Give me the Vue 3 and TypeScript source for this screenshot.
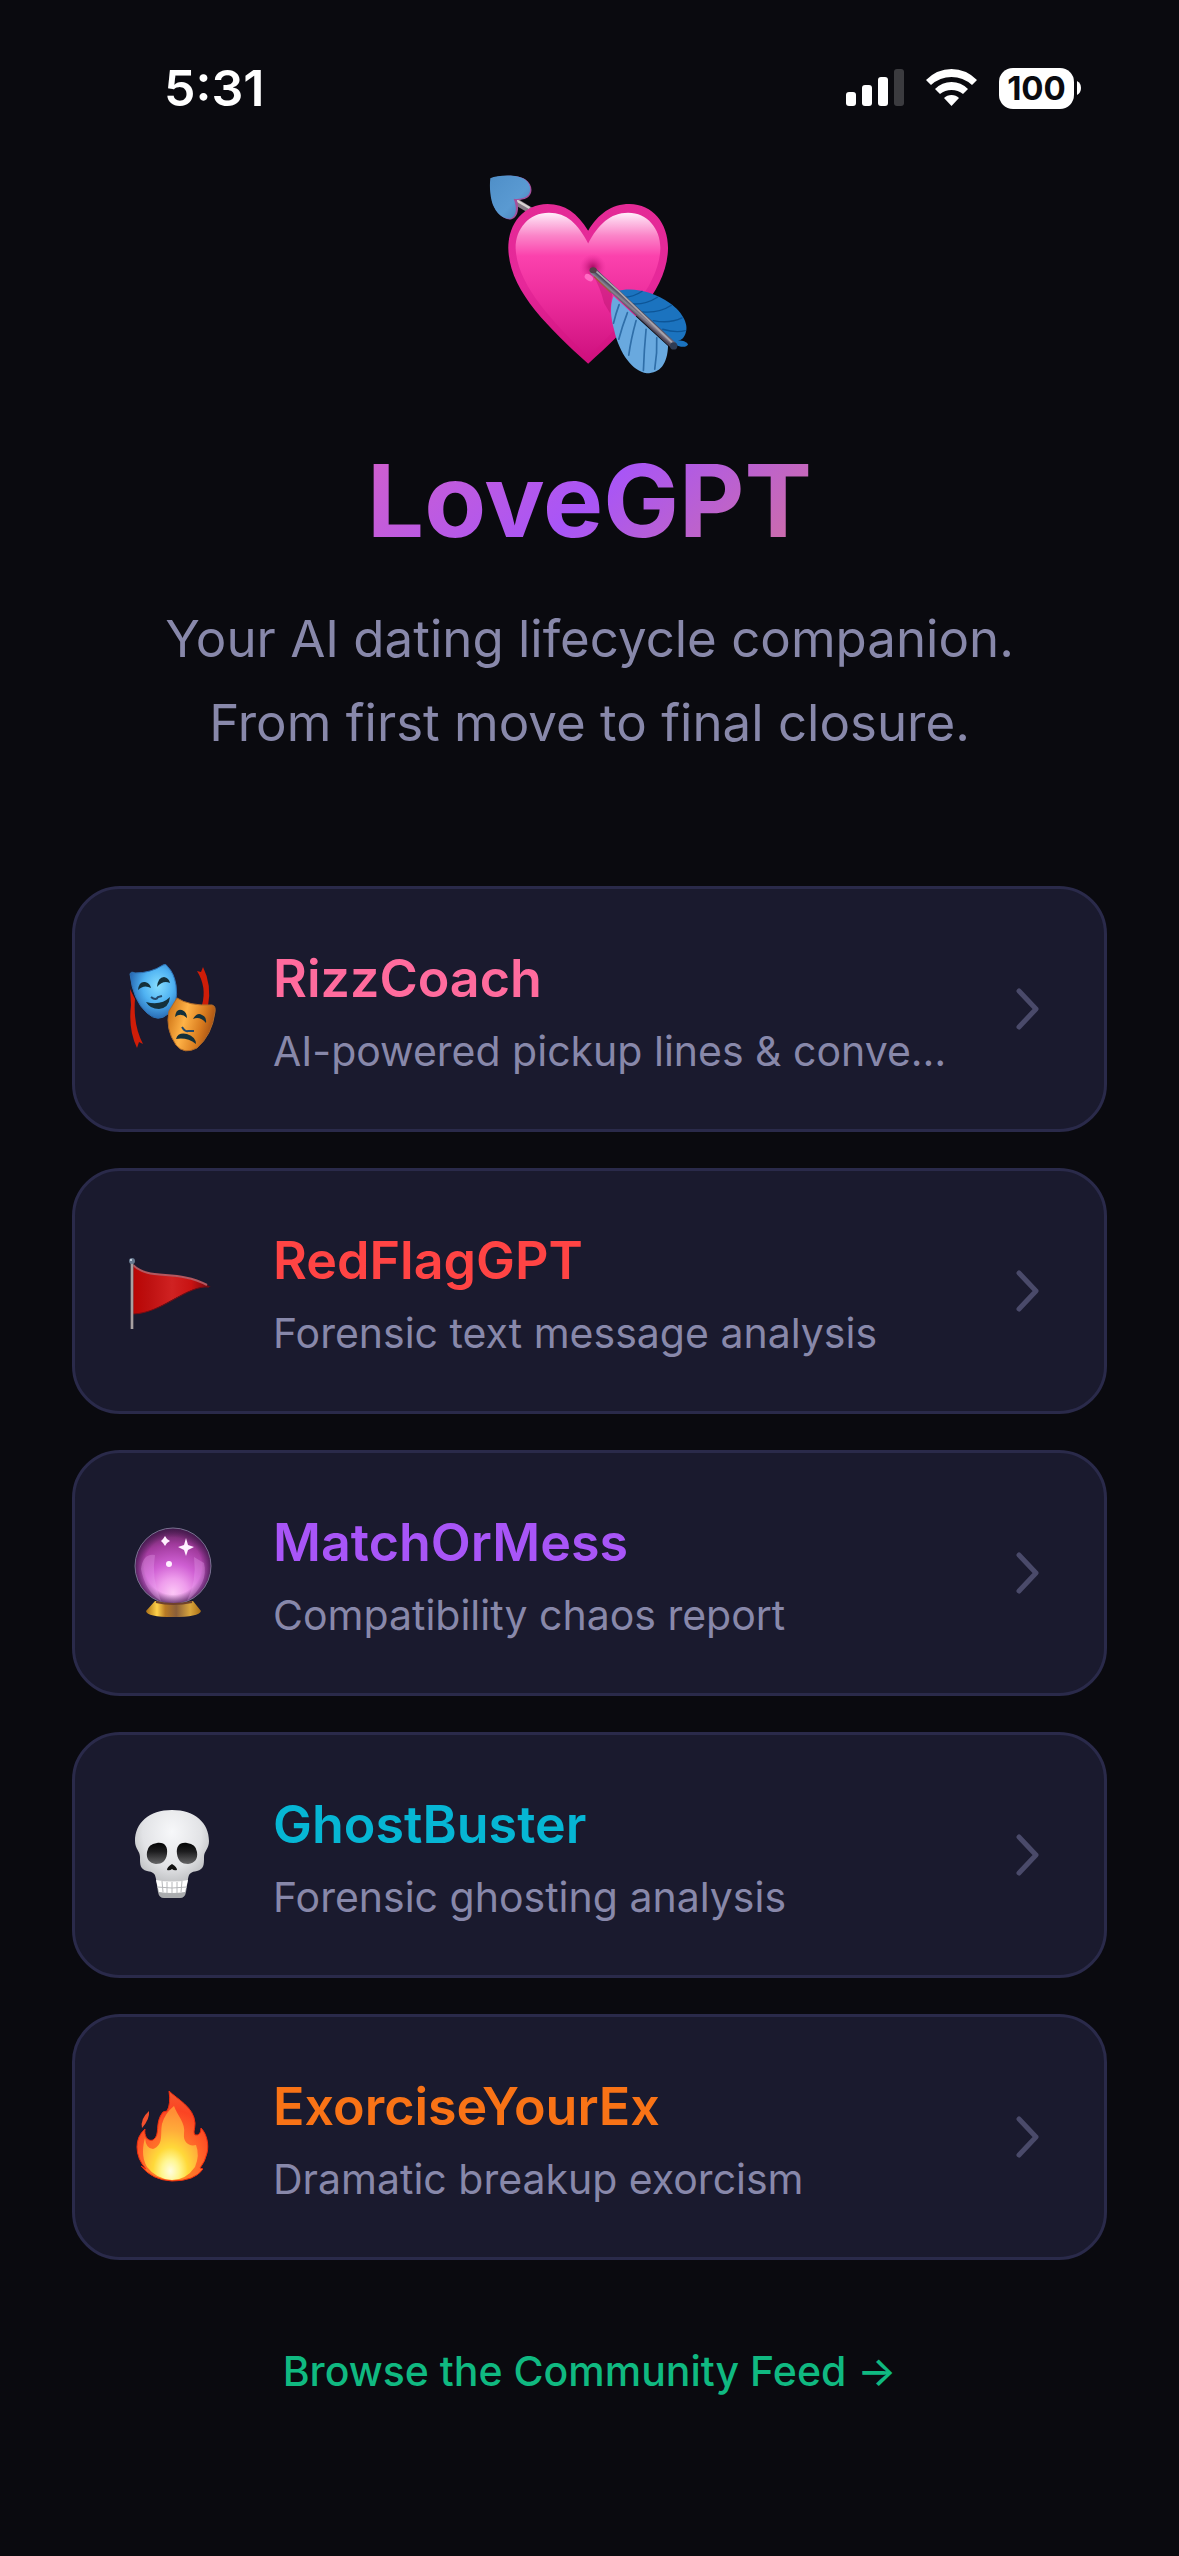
<script setup lang="ts">
interface Tool {
  id: 'masks' | 'flag' | 'crystal' | 'skull' | 'fire'
  name: string
  description: string
}

const tools: Tool[] = [
  { id: 'masks', name: 'RizzCoach', description: 'AI-powered pickup lines & conve…' },
  { id: 'flag', name: 'RedFlagGPT', description: 'Forensic text message analysis' },
  { id: 'crystal', name: 'MatchOrMess', description: 'Compatibility chaos report' },
  { id: 'skull', name: 'GhostBuster', description: 'Forensic ghosting analysis' },
  { id: 'fire', name: 'ExorciseYourEx', description: 'Dramatic breakup exorcism' },
]
</script>

<template>
  <div class="screen">
    <header class="status">
      <time class="clock">5:31</time>
      <div class="indicators">
        <svg class="signal" viewBox="0 0 58 38" aria-label="Signal">
          <rect x="0" y="23" width="10" height="14" rx="3" />
          <rect x="16" y="16" width="10" height="21" rx="3" />
          <rect x="32" y="8" width="10" height="29" rx="3" />
          <rect x="48" y="0" width="10" height="37" rx="3" opacity=".2" />
        </svg>
        <svg class="wifi" viewBox="0 0 51 38" aria-label="Wi-Fi">
          <path d="M0 11Q11 0 25.500 0T51 11L46 16Q37 8 25.500 8T5 16Z" />
          <path d="M9 20Q16 13 25.500 13T42 20L37 25Q32 21 25.500 21T14 25Z" />
          <path d="M18 29Q21 26 25.500 26T33 29L25.500 37Z" />
        </svg>
        <div class="battery">
          <span class="level">100</span>
          <svg class="nub" viewBox="0 0 4 14"><path d="M0 0Q4 2 4 7T0 14Z" /></svg>
        </div>
      </div>
    </header>

    <main class="content">
      <svg class="hero" viewBox="40 30 640 630" role="img" aria-label="Heart with arrow">
        <defs>
          <linearGradient id="heartEdge" x1="0" y1="0" x2="0" y2="1">
            <stop offset="0" stop-color="#e42a96" />
            <stop offset=".5" stop-color="#e6289a" />
            <stop offset="1" stop-color="#cf0f7c" />
          </linearGradient>
          <linearGradient id="heartFill" x1="0" y1="0" x2="0" y2="1">
            <stop offset="0" stop-color="#fff0fa" />
            <stop offset=".06" stop-color="#fdc4e6" />
            <stop offset=".16" stop-color="#fb84c8" />
            <stop offset=".3" stop-color="#fb42ad" />
            <stop offset=".6" stop-color="#ec2c9c" />
            <stop offset="1" stop-color="#d01280" />
          </linearGradient>
          <linearGradient id="tipFill" x1="0" y1="0" x2="1" y2="1">
            <stop offset="0" stop-color="#4f8fc8" />
            <stop offset=".6" stop-color="#5a9ad2" />
            <stop offset="1" stop-color="#4479b0" />
          </linearGradient>
          <linearGradient id="shaft" gradientUnits="userSpaceOnUse" x1="480" y1="450" x2="492" y2="436">
            <stop offset="0" stop-color="#4d4557" />
            <stop offset=".5" stop-color="#8b8594" />
            <stop offset="1" stop-color="#4b4a60" />
          </linearGradient>
          <radialGradient id="pierce">
            <stop offset="0" stop-color="#a80a62" />
            <stop offset="1" stop-color="#e6289a" stop-opacity="0" />
          </radialGradient>
        </defs>
        <path d="M128 118L184 152" stroke="#857b85" stroke-width="20" />
        <path d="M132 116L180 144" stroke="#d8d3d3" stroke-width="7" />
        <path d="M66 54C90 45 145 42 168 58C192 74 192 108 165 117C154 120 148 120 142 120C150 148 144 172 124 178C98 180 74 150 68 124C62 98 62 72 66 54Z" fill="#a54f9c" />
        <path d="M62 54C86 44 142 41 166 58C188 74 188 106 160 114C149 117 140 117 132 116C144 146 140 170 120 176C94 178 72 148 66 122C60 96 60 72 62 54Z" fill="url(#tipFill)" />
        <path d="M356 212C324 160 286 132 234 132C164 132 116 190 116 264C118 390 232 498 356 612C480 498 594 392 596 264C596 190 550 132 480 132C426 132 386 162 356 212Z" fill="url(#heartEdge)" />
        <path d="M356 250C326 192 292 158 238 158C178 158 138 206 138 264C142 372 242 478 356 590C470 478 570 374 573 264C573 206 534 158 476 158C422 158 386 194 356 250Z" fill="url(#heartFill)" />
        <path d="M370 345Q392 380 404 430L422 460L428 400Z" fill="#b9146f" opacity=".45" />
        <circle cx="370" cy="322" r="40" fill="url(#pierce)" />
        <ellipse cx="358" cy="353" rx="14" ry="9" fill="#ff6cc4" transform="rotate(35 358 353)" />
        <path d="M440 394C490 380 550 394 602 430C642 458 660 498 648 522C642 538 632 542 622 542C634 540 654 544 656 554C650 566 628 560 612 552L604 560Z" fill="#1b73bf" />
        <path d="M432 408C420 440 424 472 434 510C450 582 490 634 532 640C572 640 594 612 596 558Z" fill="#69a9df" />
        <g fill="none" stroke="#2f6ea8" stroke-width="5" stroke-linecap="round">
          <path d="M449 434Q440 458 432 490M474 458Q458 500 448 538M500 482Q484 540 478 586M530 508Q524 570 522 632M562 534Q564 580 556 628" />
        </g>
        <g fill="none" stroke="#0d5597" stroke-width="4" stroke-linecap="round">
          <path d="M462 412Q492 412 518 394M490 432Q530 434 564 412M520 456Q570 460 606 436M552 482Q600 492 638 474M580 508Q620 520 648 512" />
        </g>
        <path d="M372 334L612 556" stroke="url(#shaft)" stroke-width="21" stroke-linecap="round" />
        <path d="M378 332L448 394L606 546" fill="none" stroke="#aaa5ab" stroke-width="5" stroke-linecap="round" />
        <path d="M374 350L424 398" stroke="#a8583e" stroke-width="4" />
        <ellipse cx="371" cy="331" rx="11" ry="9" fill="#55404a" />
        <circle cx="613" cy="558" r="11" fill="#2e3b52" />
      </svg>

      <h1 class="title">LoveGPT</h1>
      <p class="tagline">Your AI dating lifecycle companion.<br />From first move to final closure.</p>

      <nav class="tools" aria-label="Tools">
        <a v-for="tool in tools" :key="tool.id" href="#" class="card">
          <svg v-if="tool.id === 'masks'" class="emoji" viewBox="0 0 92 92" aria-hidden="true">
            <defs>
              <radialGradient id="comedy" cx=".6" cy=".4" r=".65">
                <stop offset="0" stop-color="#86deff" />
                <stop offset=".5" stop-color="#4fb2f2" />
                <stop offset="1" stop-color="#2361ac" />
              </radialGradient>
              <linearGradient id="tragedy" x1="0" y1=".3" x2="1" y2=".6">
                <stop offset="0" stop-color="#d07618" />
                <stop offset=".35" stop-color="#ffb347" />
                <stop offset=".7" stop-color="#d97c1f" />
                <stop offset="1" stop-color="#9c4710" />
              </linearGradient>
            </defs>
            <path d="M3 26L8 36Q6 62 16 81L12 79L10 85Q1 66 4 42Z" fill="#cf1d08" />
            <path d="M70 8L74 9L76 4Q85 22 81 43L75 42Q80 24 70 8Z" fill="#cf1d08" />
            <path d="M3 11Q4 8 8 10Q24 10 36 2Q39 0 41 4Q47 10 49 22Q52 42 41 51Q31 60 20 50Q6 38 3 11Z" fill="url(#comedy)" stroke="#2e72b5" />
            <path d="M50 35Q62 43 85 42Q89 43 88 49Q85 72 70 85Q57 92 49 82Q38 66 42 48Z" fill="url(#tragedy)" stroke="#b06a28" />
            <g fill="#14303a">
              <path d="M11 27Q12 18 18 19Q23 20 24 25Q17 21 11 27Z" />
              <path d="M30 24Q31 14 37 14Q42 15 43 20Q36 17 30 24Z" />
              <path d="M19 39Q34 43 43 34Q42 45 32 46Q23 46 19 39Z" />
              <path d="M48 54Q49 45 55 47Q60 49 60 55Q54 49 48 54Z" />
              <path d="M66 56Q70 49 75 52Q80 54 79 60Q73 53 66 56Z" />
              <path d="M49 76Q51 69 60 71Q69 74 69 81Q60 74 49 76Z" />
            </g>
            <path d="M24 34Q29 38 31 34L35 33M55 64Q58 69 61 68L67 68" fill="none" stroke="#24496a" stroke-width="2" />
          </svg>

          <svg v-else-if="tool.id === 'flag'" class="emoji" viewBox="0 0 92 92" aria-hidden="true">
            <defs>
              <linearGradient id="pennant" x1="0" y1="0" x2="1" y2="0">
                <stop offset="0" stop-color="#b90504" />
                <stop offset=".2" stop-color="#bd1010" />
                <stop offset=".5" stop-color="#d02222" />
                <stop offset=".75" stop-color="#c81212" />
                <stop offset="1" stop-color="#6c0710" />
              </linearGradient>
            </defs>
            <path d="M6 20C22 36 50 24 84 42C60 38 36 68 6 69Z" fill="url(#pennant)" />
            <path d="M6 20C22 36 50 24 80 40" fill="none" stroke="#b4575f" stroke-width="2" />
            <path d="M82 42C60 40 36 68 6 69" fill="none" stroke="#760c12" stroke-width="1" />
            <path d="M5 17V84" stroke="#777076" stroke-width="3" />
            <path d="M5 17V84" stroke="#d8d0cc" stroke-width="1" />
            <circle cx="5" cy="16" r="3" fill="#68798f" />
            <circle cx="4" cy="15" r="1" fill="#dce7f2" />
          </svg>

          <svg v-else-if="tool.id === 'crystal'" class="emoji" viewBox="0 0 92 92" aria-hidden="true">
            <defs>
              <radialGradient id="orb" cx=".5" cy=".85" r=".85">
                <stop offset="0" stop-color="#fcc6f6" />
                <stop offset=".22" stop-color="#ee9cec" />
                <stop offset=".45" stop-color="#cf5fd3" />
                <stop offset=".75" stop-color="#a03a9c" />
                <stop offset="1" stop-color="#552153" />
              </radialGradient>
              <radialGradient id="orbEdge">
                <stop offset=".75" stop-color="#3a1648" stop-opacity="0" />
                <stop offset="1" stop-color="#3a1648" stop-opacity=".75" />
              </radialGradient>
              <linearGradient id="stand" x1="0" y1="0" x2="1" y2="0">
                <stop offset="0" stop-color="#a86e16" />
                <stop offset=".2" stop-color="#ffd24a" />
                <stop offset=".35" stop-color="#b87a25" />
                <stop offset=".55" stop-color="#8a5e39" />
                <stop offset=".8" stop-color="#d9a63d" />
                <stop offset="1" stop-color="#a86e16" />
              </linearGradient>
            </defs>
            <circle cx="46" cy="39" r="38" fill="url(#orb)" />
            <circle cx="46" cy="39" r="38" fill="url(#orbEdge)" stroke="#77708f" />
            <path d="M14 42Q18 64 34 74Q24 50 28 28Q16 26 14 42ZM77 36Q82 56 60 74Q70 54 67 30Z" fill="#ecaaf2" opacity=".3" />
            <path d="M28 74Q46 79 66 74L74 84Q72 90 46 90T19 84Z" fill="url(#stand)" />
            <path d="M29 75Q46 79 65 75" fill="none" stroke="#70422b" stroke-width="2" />
            <g fill="#fff0ff">
              <path d="M59 11L61 18L67 20L61 23L59 29L57 23L51 20L57 18Z" />
              <path d="M38 9L40 12L43 14L40 16L38 19L36 16L34 14L36 12Z" />
              <circle cx="42" cy="37" r="3" />
            </g>
          </svg>

          <svg v-else-if="tool.id === 'skull'" class="emoji" viewBox="0 0 92 92" aria-hidden="true">
            <defs>
              <radialGradient id="bone" cx=".5" cy=".25" r=".72">
                <stop offset="0" stop-color="#f7f8fa" />
                <stop offset=".55" stop-color="#e2e3e6" />
                <stop offset="1" stop-color="#a9abad" />
              </radialGradient>
              <linearGradient id="socket" x1="0" y1="0" x2="0" y2="1">
                <stop offset="0" stop-color="#050505" />
                <stop offset=".4" stop-color="#1c1c1e" />
                <stop offset="1" stop-color="#656567" />
              </linearGradient>
            </defs>
            <path d="M45 1C22 1 8 14 8 32C8 40 13 42 13 48C13 56 13 60 20 62C26 63 28 64 29 70L31 83Q32 89 37 89H53Q58 89 59 83L61 70C62 64 64 63 70 62C77 60 77 56 77 48C77 42 82 40 82 32C82 14 68 1 45 1Z" fill="url(#bone)" />
            <path d="M30 34C38 33 41 38 40 45C39 52 35 55 29 55C22 54 19 50 20 43Q21 35 30 34ZM60 34C52 33 49 38 50 45C51 52 55 55 61 55C68 54 71 50 70 43Q69 35 60 34Z" fill="url(#socket)" />
            <path d="M45 55Q40 58 40 61Q43 62 45 60Q47 62 50 61Q50 58 45 55Z" fill="#111" />
            <path d="M29 71Q45 74 61 71L58 83Q45 85 32 83Z" fill="#fff" />
            <path d="M30 78Q45 80 60 78M35 72L36 83M40 73V84M45 73V84M50 73V84M55 72L54 83" fill="none" stroke="#b5b7ba" stroke-width="1" />
          </svg>

          <svg v-else class="emoji" viewBox="0 0 92 92" aria-hidden="true">
            <defs>
              <radialGradient id="flameOuter" cx=".5" cy=".85" r=".85">
                <stop offset="0" stop-color="#ff9d1c" />
                <stop offset=".45" stop-color="#ff6a2a" />
                <stop offset=".75" stop-color="#fb4423" />
                <stop offset="1" stop-color="#f4592f" />
              </radialGradient>
              <radialGradient id="flameInner" cx=".5" cy=".88" r=".8">
                <stop offset="0" stop-color="#fffde0" />
                <stop offset=".2" stop-color="#fff690" />
                <stop offset=".4" stop-color="#ffd93a" />
                <stop offset=".7" stop-color="#ffab3a" />
                <stop offset="1" stop-color="#ff8f35" />
              </radialGradient>
            </defs>
            <path d="M22 20Q23 28 15 37Q13 28 22 20Z" fill="#f4502e" />
            <path d="M42 0C50 8 67 16 68 32C68 38 66 41 68 44Q74 45 74 37C80 43 82 54 80 62Q78 71 73 77L76 78Q68 90 45 90Q25 89 14 75L19 78Q10 68 10 56Q10 45 18 38C17 44 20 51 26 49C34 44 27 32 36 21L40 20Q44 13 42 0Z" fill="url(#flameOuter)" stroke="#ee2d0e" />
            <path d="M47 15C50 24 59 32 57 43C56 51 62 56 69 54Q73 64 68 76Q59 89 45 89Q29 88 20 76C14 66 16 54 18 47Q19 58 26 58C37 54 33 43 35 33Q38 22 47 15Z" fill="url(#flameInner)" />
          </svg>

          <div class="copy">
            <h2 class="name" :class="tool.id">{{ tool.name }}</h2>
            <p class="description">{{ tool.description }}</p>
          </div>
          <svg class="chevron" viewBox="0 0 48 48" aria-hidden="true">
            <path d="M17 6L34 24L17 42" />
          </svg>
        </a>
      </nav>

      <a class="feed" href="#">Browse the Community Feed →</a>
    </main>
  </div>
</template>

<style>
body {
  background: #0a0a0f;
}
</style>

<style scoped>
.screen {
  min-height: 100vh;
  box-sizing: border-box;
  padding-bottom: 96px;
  background: #0a0a0f;
  color: #8888aa;
  font-family: Inter, "Liberation Sans", sans-serif;
}
.status {
  display: flex;
  justify-content: space-between;
  align-items: center;
  padding: 58px 98px 52px 164px;
  color: #fff;
}
.clock {
  font-size: 50px;
  line-height: 60px;
  font-weight: 600;
}
.indicators {
  display: flex;
  align-items: center;
  gap: 22px;
  fill: #fff;
}
.signal {
  width: 58px;
  height: 38px;
}
.wifi {
  width: 51px;
  height: 38px;
}
.battery {
  display: flex;
  align-items: center;
  gap: 3px;
}
.level {
  width: 75px;
  border-radius: 14px;
  background: #fff;
  color: #0a0a0f;
  font-size: 33px;
  line-height: 41px;
  font-weight: 700;
  text-align: center;
}
.nub {
  width: 4px;
  height: 14px;
}
.content {
  display: flex;
  flex-direction: column;
  align-items: center;
  padding: 0 72px;
}
.hero {
  width: 213px;
  height: 210px;
}
.title {
  align-self: stretch;
  margin: 60px 0 37px;
  background: linear-gradient(135deg, #ff6b9d, #a855f7, #ff8c42);
  -webkit-background-clip: text;
  background-clip: text;
  color: transparent;
  font-size: 101px;
  line-height: 120px;
  font-weight: 700;
  text-align: center;
}
.tagline {
  margin: 0;
  font-size: 51px;
  line-height: 84px;
  text-align: center;
}
.tools {
  align-self: stretch;
  display: flex;
  flex-direction: column;
  gap: 36px;
  margin-top: 121px;
}
.card {
  display: flex;
  align-items: center;
  gap: 54px;
  padding: 53px 54px 53px 52px;
  border: 3px solid #2a2a4a;
  border-radius: 48px;
  background: #1a1a2e;
  color: inherit;
  text-decoration: none;
}
.emoji {
  flex: none;
  width: 92px;
  height: 92px;
}
.copy {
  flex: 1;
  min-width: 0;
}
.name {
  margin: 0 0 10px;
  font-size: 52px;
  line-height: 74px;
  font-weight: 600;
}
.name.masks {
  color: #ff6b9d;
}
.name.flag {
  color: #ff4444;
}
.name.crystal {
  color: #a855f7;
}
.name.skull {
  color: #06b6d4;
}
.name.fire {
  color: #f97316;
}
.description {
  margin: 0;
  overflow: hidden;
  font-size: 41px;
  line-height: 50px;
  text-overflow: ellipsis;
  white-space: nowrap;
}
.chevron {
  flex: none;
  width: 48px;
  height: 48px;
  fill: none;
  stroke: #4a4a6a;
  stroke-width: 5;
  stroke-linecap: round;
  stroke-linejoin: round;
}
.feed {
  margin-top: 81px;
  color: #10b981;
  font-size: 41px;
  line-height: 60px;
  font-weight: 500;
  text-decoration: none;
}
</style>
